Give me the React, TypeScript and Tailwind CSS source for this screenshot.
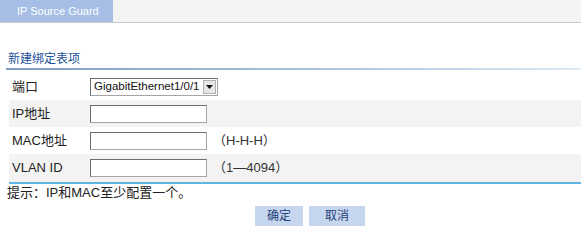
import React from "react";

const font = { fontFamily: '"Liberation Sans", Arial, "Noto Sans CJK SC", sans-serif' };

function Row({ label, gray, children }: { label: string; gray?: boolean; children: React.ReactNode }) {
  return (
    <div className={`flex items-center h-[27px] ${gray ? "bg-[#f3f3f3]" : "bg-white"}`}>
      <div className="w-[81px] pl-[3px] text-[13px] text-[#222]">{label}</div>
      <div className="flex items-center">{children}</div>
    </div>
  );
}

function Input() {
  return (
    <div className="w-[117px] h-[18px] bg-white border border-[#a5a5a5] border-t-[#6e6e6e] border-l-[#6e6e6e]" />
  );
}

export default function App() {
  return (
    <div className="w-[581px] h-[247px] bg-white overflow-hidden" style={font}>
      <div className="flex h-[23px] bg-[#f4f4f4] border-b border-[#c9c9c9]">
        <div className="w-[113px] bg-[#a6bee6] text-white text-[11px] pl-[17px] flex items-center">IP Source Guard</div>
      </div>
      <div className="mt-[29px] pl-[8px] text-[12px] text-[#1d4f97] leading-[14px]">新建绑定表项</div>
      <div className="mt-[2px] ml-[6px] h-[2px] bg-gradient-to-r from-[#7f9cc4] via-[#a9bfd8] to-[#dbe9f4]" />
      <div className="ml-[9px] mt-[3px] border-b-2 border-[#5cb6e6]">
        <Row label="端口">
          <div className="w-[128px] h-[18px] bg-white border border-[#a5a5a5] border-t-[#6e6e6e] border-l-[#6e6e6e] flex items-center justify-between pl-[3px] pr-[1px]">
            <span className="text-[11.5px] text-[#111]">GigabitEthernet1/0/1</span>
            <span className="w-[13px] h-[14px] bg-[#e6e6e6] border border-[#b0b0b0] flex items-center justify-center">
              <svg width="7" height="4" viewBox="0 0 7 4"><path d="M0 0h7L3.5 4z" fill="#111" /></svg>
            </span>
          </div>
        </Row>
        <Row label="IP地址" gray>
          <Input />
        </Row>
        <Row label="MAC地址">
          <Input />
          <span className="ml-[6px] text-[13px] text-[#333]">（H-H-H）</span>
        </Row>
        <div className="border-b border-[#fbeee6]">
          <Row label="VLAN ID" gray>
            <Input />
            <span className="ml-[6px] text-[13px] text-[#333]">（1—4094）</span>
          </Row>
        </div>
      </div>
      <div className="pl-[7px] mt-[1px] text-[13px] text-[#222] leading-[16px]">提示：IP和MAC至少配置一个。</div>
      <div className="flex justify-center gap-[6px] mt-[5px] pl-[39px]">
        <button className="w-[48px] h-[20px] bg-[#c6d6ef] text-[12px] text-[#1f3f78]">确定</button>
        <button className="w-[56px] h-[20px] bg-[#c6d6ef] text-[12px] text-[#1f3f78]">取消</button>
      </div>
    </div>
  );
}
